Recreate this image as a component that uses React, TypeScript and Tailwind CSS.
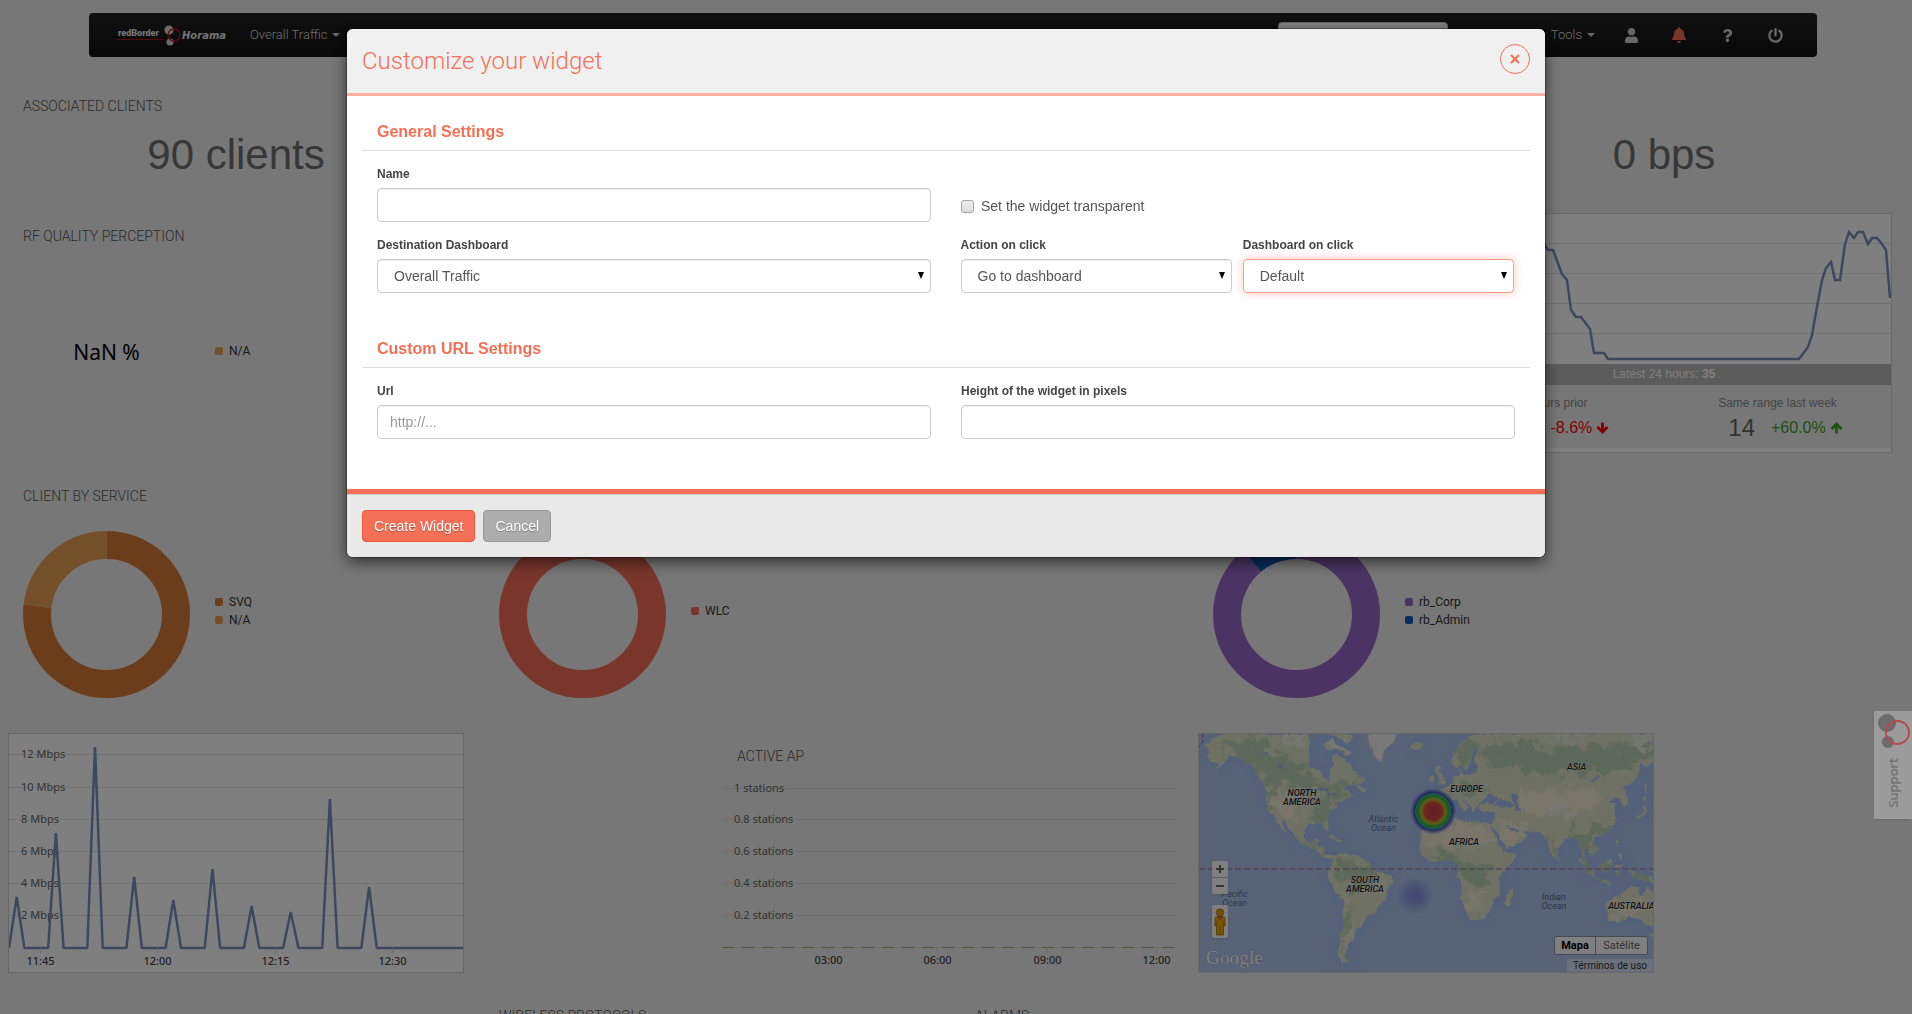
import React from "react";
import type { ReactNode } from "react";
import { FaBell, FaPowerOff, FaQuestion, FaUser } from "react-icons/fa";

/* ---------- navigation bar ---------- */

function Caret() {
  return <span className="border-x-4 border-t-4 border-x-transparent border-t-[#d0d0d0]" />;
}

function Logo() {
  return (
    <svg viewBox="0 0 112 22" className="h-[22px] w-28 overflow-visible" role="img" aria-label="redBorder Horama">
      <text x="2" y="12" fill="#e6e6e6" fontFamily="Roboto" fontWeight="900" fontSize="9">redBorder</text>
      <path d="M0 15.500H47" stroke="#b01010" strokeWidth="1" />
      <circle cx="53" cy="6" r="4.500" fill="#d8d8d8" />
      <circle cx="54" cy="18" r="3.500" fill="#d8d8d8" />
      <circle cx="58" cy="11" r="6" fill="none" stroke="#c01414" strokeWidth="1.300" />
      <text x="66" y="15" fill="#e6e6e6" fontFamily="DejaVu Sans" fontStyle="italic" fontWeight="bold" fontSize="10">Horama</text>
    </svg>
  );
}

function NavIcon({ label, children }: { label: string; children: ReactNode }) {
  return (
    <button type="button" aria-label={label} className="flex h-full w-12 items-center justify-center text-[15px] text-[#cfcfcf]">
      {children}
    </button>
  );
}

function Navbar() {
  return (
    <nav className="mr-[95px] ml-[89px] flex h-11 items-center rounded bg-linear-to-b from-[#222] to-[#111] pr-[18px] pl-[27px] text-[13px] font-light text-[#dcdcdc]">
      <Logo />
      <button type="button" className="ml-[22px] flex items-center gap-[5px]">
        Overall Traffic <Caret />
      </button>
      <div className="ml-auto flex h-full items-center">
        <input aria-label="Search" className="mr-[103px] h-[26px] w-[170px] rounded border border-[#ccc] bg-white px-2" />
        <button type="button" className="mr-3 flex items-center gap-[5px]">
          Tools <Caret />
        </button>
        <NavIcon label="User"><FaUser /></NavIcon>
        <NavIcon label="Alarms"><FaBell className="text-[16px] text-[#f06a52]" /></NavIcon>
        <NavIcon label="Help"><FaQuestion className="text-[13px]" /></NavIcon>
        <NavIcon label="Log out"><FaPowerOff /></NavIcon>
      </div>
    </nav>
  );
}

/* ---------- dashboard widgets ---------- */

function Title({ children }: { children?: ReactNode }) {
  return <h2 className="min-h-[33px] pt-[13px] pl-[15px] text-sm/5 font-light text-[#555]">{children}</h2>;
}

function BigNumber({ title, value }: { title?: string; value: string }) {
  return (
    <>
      <Title>{title}</Title>
      <p className="mt-[13px] text-center font-['Liberation_Sans',sans-serif] text-[42px]/[52px] text-[#6e6e6e]">{value}</p>
    </>
  );
}

type Slice = { name: string; color: string; share: number };

function Donut({ slices }: { slices: Slice[] }) {
  const length = 2 * Math.PI * 69.5;
  let start = 0;
  return (
    <svg viewBox="0 0 167 167" className="size-[167px]">
      {slices.map((s) => {
        const offset = -start * length;
        start += s.share;
        return (
          <circle key={s.name} cx="83.500" cy="83.500" r="69.500" fill="none" stroke={s.color} strokeWidth="28"
            strokeDasharray={`${s.share * length} ${length}`} strokeDashoffset={offset} transform="rotate(-90 83.5 83.5)" />
        );
      })}
    </svg>
  );
}

function PieWidget({ title, slices, empty }: { title: string; slices: Slice[]; empty?: string }) {
  return (
    <>
      <Title>{title}</Title>
      <div className="mt-[25px] flex items-center gap-[25px] pl-[15px]">
        {empty ? (
          <p className="flex h-[167px] w-[167px] items-center justify-center pb-1 font-['Noto_Sans',sans-serif] text-[21px] text-black">{empty}</p>
        ) : (
          <Donut slices={slices} />
        )}
        <ul className="mb-2 text-xs/[18px] text-[#333]">
          {slices.map((s) => (
            <li key={s.name} className="flex items-center gap-1.5">
              <span className="size-2 rounded-xs" style={{ backgroundColor: s.color }} />
              {s.name}
            </li>
          ))}
        </ul>
      </div>
    </>
  );
}

const traffic = [164, 100, 14, 144, 167, 136, 173, 179, 66, 154];
const trafficLine =
  traffic.map((y, i) => {
    const x = 7.7 + i * 39.15;
    return `${x - 7.7},214 ${x},${y - 1} ${x + 7.7},214`;
  }).join(" ") + " 454,214";

function Ticks({ items, y }: { items: [number, string][]; y: number }) {
  return (
    <g fontSize="11" fill="#444" fontWeight="500" textAnchor="middle">
      {items.map(([x, label]) => (
        <g key={label}>
          <path d={`M${x} ${y - 17}V${y - 12}`} stroke="#d4d4d4" />
          <text x={x} y={y}>{label}</text>
        </g>
      ))}
    </g>
  );
}

function TrafficChart() {
  return (
    <div className="h-full border border-[#cfcfcf] bg-white">
      <svg viewBox="0 0 454 238" className="h-full w-full font-['Noto_Sans',sans-serif]">
        {["12", "10", "8", "6", "4", "2"].map((v, i) => {
          const y = i === 0 ? 20.5 : 21.5 + i * 32;
          return (
            <g key={v}>
              <path d={`M0 ${y}H454`} stroke="#e4e4e4" />
              <text x="12" y={y + 3} fontSize="11" fill="#666">{v} Mbps</text>
            </g>
          );
        })}
        <polyline points={trafficLine} fill="none" stroke="#7b8fbf" strokeWidth="2.500" strokeLinejoin="bevel" />
        <Ticks y={231} items={[[31.5, "11:45"], [148.5, "12:00"], [266.5, "12:15"], [383.5, "12:30"]]} />
      </svg>
    </div>
  );
}

function ActiveApChart() {
  return (
    <div className="relative h-full">
      <svg viewBox="0 0 456 240" className="absolute inset-0 h-full w-full font-['Noto_Sans',sans-serif]">
        {["1", "0.8", "0.6", "0.4", "0.2"].map((v, i) => {
          const y = i === 0 ? 55.5 : 54.5 + i * 32;
          return (
            <g key={v}>
              <path d={`M0 ${y}H456`} stroke="#dcdcdc" />
              <text x="12" y={y + 3} fontSize="11" fill="#666">{v} stations</text>
            </g>
          );
        })}
        <path d="M0 214.500H456" stroke="#dcdcdc" />
        <path d="M0 214.500H456" stroke="#a0a078" strokeDasharray="12 8" />
        <Ticks y={231} items={[[106.5, "03:00"], [215.5, "06:00"], [325.5, "09:00"], [434.5, "12:00"]]} />
      </svg>
      <Title>ACTIVE AP</Title>
    </div>
  );
}

const latestLine =
  "0,36 60,30 105,28 108,31 111,36 116,36 125,60 130,66 134,96 139,103 144,103 153,115 157,139 167,139 171,145 362,145 371,133 375,121 380,93 385,66 389,54 394,48 398,66 403,66 408,30 412,18 417,24 421,18 426,18 431,30 435,24 440,24 445,30 449,36 453,84";

function Arrow({ up }: { up: boolean }) {
  return (
    <svg viewBox="0 0 13 12" className={up ? "h-3 w-[13px]" : "h-3 w-[13px] rotate-180"}>
      <path d="M6.500 11.500V2.500M1.500 7L6.500 2L11.500 7" fill="none" stroke="currentColor" strokeWidth="2.800" />
    </svg>
  );
}

function Compare({ label, value, change, up }: { label: string; value: string; change: string; up: boolean }) {
  return (
    <div className="flex-1 text-center">
      <p className="pt-2 text-xs/5 text-[#888]">{label}</p>
      <p className="flex items-center justify-center pl-4 text-2xl/[30px] text-[#666]">
        {value}
        <span className={up ? "ml-4 flex items-center gap-1 text-base text-[#3ca020]" : "ml-4 flex items-center gap-1 text-base text-[#ff0000]"}>
          {change}
          <Arrow up={up} />
        </span>
      </p>
    </div>
  );
}

function LatestWidget() {
  return (
    <div className="flex h-full flex-col border border-[#cfcfcf] bg-white font-['Liberation_Sans',sans-serif]">
      <svg viewBox="0 0 454 150" className="w-full flex-1">
        <path d="M0 29.500H454M0 59.500H454M0 89.500H454M0 119.500H454" stroke="#e4e4e4" />
        <polyline points={latestLine} fill="none" stroke="#7b8fbf" strokeWidth="2.500" />
      </svg>
      <p className="bg-[#b8b8b8] text-center text-xs/[21px] text-white">
        Latest 24 hours: <b>35</b>
      </p>
      <div className="mb-1 flex h-[63px] bg-[#efefef]">
        <Compare label="24 hours prior" value="38" change="-8.6%" up={false} />
        <Compare label="Same range last week" value="14" change="+60.0%" up />
      </div>
    </div>
  );
}

/* ---------- heat map ---------- */

const land = [
  // North and Central America
  "M45 62L60 45L95 27H358L362 62L354 95L362 125L392 140L404 162L418 172L422 150L418 138L432 120L424 98L440 88L462 100L480 118L490 138L520 160L528 170L505 180L470 182L456 197L474 198L486 214L462 226L446 228L437 247L425 264L410 282L416 302L412 320L402 304L394 294L372 294L352 302L342 322L347 344L364 352L372 340L388 342L382 360L400 368L402 384L420 394L430 392L430 403L405 398L384 380L350 362L322 346L312 328L290 300L270 274L278 300L290 326L276 314L255 276L236 256L228 226L230 200L222 178L202 152L186 122L152 100L118 92L100 118L68 142L88 118L60 108L50 92L62 80Z",
  // Arctic islands
  "M385 27L430 30L470 55L494 40L480 27ZM425 40L445 60L488 85L470 92L440 70L410 76L400 60ZM300 27L340 35L352 50L330 48ZM500 182L528 192L532 202L512 202Z",
  // Caribbean
  "M408 334L430 334L450 344L466 350L446 352L428 340Z",
  // Iceland, Ireland, Great Britain
  "M660 58L680 52L698 56L694 70L676 76L664 70ZM718 156L730 150L734 164L722 174ZM738 124L750 122L748 138L764 162L766 174L738 180L750 164L744 150L734 142Z",
  // Europe and Asia
  "M700 224L745 222L750 196L770 186L785 176L795 156L808 150L812 132L822 150L852 145L866 122L852 108L868 66L850 75L840 112L830 136L812 122L798 126L784 112L788 85L810 58L828 38L850 27H1389V112L1368 124L1352 110L1344 150L1330 170L1300 188L1308 206L1314 240L1298 244L1290 218L1268 222L1256 232L1276 236L1270 254L1280 282L1266 312L1240 330L1214 338L1212 350L1224 374L1206 396L1194 378L1182 370L1190 408L1216 448L1200 440L1180 402L1166 352L1150 335L1128 343L1106 370L1096 402L1082 386L1070 345L1048 322L1000 318L1010 332L984 358L940 374L920 336L902 302L912 285L916 262L876 262L864 246L876 234L908 236L926 222L902 206L880 225L862 244L850 264L840 242L812 216L838 250L822 258L800 225L785 226L772 242L745 262L720 266L704 260Z",
  // Africa and Madagascar
  "M712 278L740 264L792 260L802 284L832 292L852 286L902 298L908 316L926 352L942 380L978 384L966 412L932 450L926 478L932 502L912 526L902 556L880 582L840 588L828 556L812 520L816 482L800 452L802 420L782 404L742 412L712 408L688 378L690 335L700 306ZM968 488L970 508L958 542L946 538L950 508Z",
  // South America
  "M430 396L455 382L500 392L535 408L545 430L604 452L610 468L590 500L586 526L560 545L555 562L532 576L520 600L500 612L496 632L482 650L470 672L464 698L478 714L455 712L442 690L450 640L460 590L462 532L440 506L416 466L414 440L428 425Z",
  // Australia
  "M1250 532L1288 512L1308 494L1326 484L1344 490L1346 506L1360 514L1370 482L1389 502V608L1370 602L1346 582L1315 576L1285 592L1256 588L1254 560L1244 542ZM1376 626L1389 624V636L1378 636Z",
  // South-east Asian islands and Japan
  "M1160 394L1178 404L1210 446L1214 458L1196 446ZM1214 460L1262 468L1262 474L1216 466ZM1230 418L1262 402L1266 422L1250 444L1234 440ZM1276 424L1300 420L1282 432L1292 450L1278 452ZM1312 432L1340 444L1389 456V472L1350 466L1326 452ZM1276 340L1286 350L1280 366ZM1282 382L1298 390L1292 404ZM1336 280L1356 264L1364 240L1370 250L1364 272L1346 282ZM1358 212L1376 222L1362 232ZM1364 160L1372 190L1366 206ZM1104 394L1112 402L1106 410Z",
].join("");

function MapLabel({ x, y, lines, sea = false }: { x: number; y: number; lines: string[]; sea?: boolean }) {
  return (
    <g fill={sea ? "#5a6e96" : "#222"} fontStyle="italic" fontWeight={sea ? 400 : 500} fontSize="27" textAnchor="middle"
      stroke={sea ? "none" : "#f4f4e8"} strokeWidth="3" paintOrder="stroke">
      {lines.map((t, i) => <text key={t} x={x} y={y + i * 26}>{t}</text>)}
    </g>
  );
}

function HeatMap() {
  return (
    <div className="relative h-full border border-[#cfcfcf] font-['Roboto',sans-serif]">
      <svg viewBox="27 27 1362 714" preserveAspectRatio="xMidYMid slice" className="h-full w-full" role="img" aria-label="World heat map">
        <defs>
          <clipPath id="land"><path d={land} /></clipPath>
          <filter id="soft" x="-10%" y="-10%" width="120%" height="120%">
            <feGaussianBlur stdDeviation="5" result="b" />
            <feTurbulence type="fractalNoise" baseFrequency="0.030" numOctaves="4" seed="7" result="n" />
            <feDisplacementMap in="b" in2="n" scale="90" xChannelSelector="R" yChannelSelector="G" />
          </filter>
          <filter id="rough" x="-5%" y="-5%" width="110%" height="110%">
            <feTurbulence type="fractalNoise" baseFrequency="0.060" numOctaves="3" seed="3" result="n" />
            <feDisplacementMap in="SourceGraphic" in2="n" scale="14" xChannelSelector="R" yChannelSelector="G" />
          </filter>
          <filter id="coast" x="-10%" y="-10%" width="120%" height="120%"><feGaussianBlur stdDeviation="18" /></filter>
          <radialGradient id="heat">
            <stop offset="0" stopColor="#c83c50" />
            <stop offset="0.380" stopColor="#d8483c" />
            <stop offset="0.460" stopColor="#d09030" />
            <stop offset="0.540" stopColor="#a8c030" />
            <stop offset="0.640" stopColor="#3cb848" />
            <stop offset="0.730" stopColor="#30b058" />
            <stop offset="0.760" stopColor="#40c0c0" />
            <stop offset="0.790" stopColor="#3038b8" stopOpacity="0.900" />
            <stop offset="1" stopColor="#4050d0" stopOpacity="0" />
          </radialGradient>
          <radialGradient id="cool">
            <stop offset="0" stopColor="#5858d8" stopOpacity="0.500" />
            <stop offset="0.500" stopColor="#5c60d8" stopOpacity="0.350" />
            <stop offset="1" stopColor="#6070e0" stopOpacity="0" />
          </radialGradient>
        </defs>
        <rect x="27" y="27" width="1362" height="714" fill="#b0c6ee" />
        <path d={land} fill="#a2bff4" stroke="#a2bff4" strokeWidth="20" filter="url(#coast)" />
        <g filter="url(#rough)">
          <path d={land} fill="#dce2c8" />
          <g clipPath="url(#land)">
            <g filter="url(#soft)">
              <g fill="#b8d0b2">
                <path d="M90 60L200 40L260 80L340 130L410 180L500 160L510 185L440 200L360 190L300 170L240 190L200 140L130 90Z" />
                <path d="M380 215L440 200L420 270L400 300L370 270Z" />
                <path d="M240 180L262 210L250 250L230 225ZM300 300L330 340L400 385L380 395Z" />
                <path d="M430 420L500 405L560 430L560 480L500 500L470 480ZM460 560L480 560L464 640L450 690Z" />
                <path d="M790 100L850 30L860 60L830 130ZM860 60L960 50L1060 70L1240 60L1389 60V100L1240 150L1120 140L1040 150L960 120L900 120Z" />
                <path d="M760 190L840 175L900 200L840 215ZM1130 310L1180 320L1240 290L1270 310L1220 340L1180 400L1140 350Z" />
                <path d="M700 385L780 390L830 410L900 430L890 480L830 475L800 430Z" />
                <path d="M1060 330L1090 335L1096 400ZM1160 390L1389 440V475L1200 470Z" />
              </g>
              <g fill="#f2ead4">
                <path d="M255 190L320 200L330 290L290 300L250 240Z" />
                <path d="M700 290L900 300L920 350L780 370L700 350Z" />
                <path d="M920 280L1010 300L990 350L940 360ZM970 200L1240 190L1220 260L1040 270L960 240Z" />
                <path d="M1270 520L1350 530L1360 570L1270 580ZM825 510L880 500L870 560L840 570Z" />
                <path d="M560 440L600 455L580 510L555 480ZM455 500L480 520L470 560ZM470 600L490 620L466 690Z" />
              </g>
              <g fill="#eceee6">
                <path d="M240 27H360L350 70L290 60ZM400 27L490 40L470 80L420 70Z" />
                <path d="M1070 240L1150 250L1140 280L1080 270ZM1040 30L1200 30L1120 50ZM1310 30H1389V70Z" />
              </g>
            </g>
            <path d="M380 190L408 194L414 208L440 210M215 90L235 84M260 120L280 126" fill="none" stroke="#9cb8ec" strokeWidth="7" />
          </g>
          <path d="M530 20H620L612 52L584 74L572 108L558 98L542 70Z" fill="#f2f2f2" stroke="#d8dcc8" strokeWidth="3" />
          <g fill="#a2bff4">
            <path d="M912 240L930 222L962 232L972 244L930 248ZM962 210L980 204L988 222L982 236L990 256L976 254L972 232Z" />
            <path d="M898 302L908 306L948 372L944 384L926 352ZM948 298L968 310L990 318L978 324L956 312ZM1200 168L1222 150L1228 156L1210 172Z" />
          </g>
        </g>
        <path d="M27 432H1389" stroke="#b08ab0" strokeWidth="5" strokeDasharray="19 8" />
        <path d="M38 27V50L27 66" stroke="#b05090" strokeWidth="3" strokeDasharray="12 6" fill="none" />
        <circle cx="730" cy="259" r="70" fill="url(#heat)" />
        <circle cx="675" cy="512" r="56" fill="url(#cool)" />
        <MapLabel x={336} y={213} lines={["NORTH", "AMERICA"]} />
        <MapLabel x={525} y={474} lines={["SOUTH", "AMERICA"]} />
        <MapLabel x={830} y={200} lines={["EUROPE"]} />
        <MapLabel x={822} y={360} lines={["AFRICA"]} />
        <MapLabel x={1160} y={135} lines={["ASIA"]} />
        <MapLabel x={1324} y={552} lines={["AUSTRALIA"]} />
        <MapLabel sea x={580} y={291} lines={["Atlantic", "Ocean"]} />
        <MapLabel sea x={134} y={516} lines={["Pacific", "Ocean"]} />
        <MapLabel sea x={1092} y={525} lines={["Indian", "Ocean"]} />
        <text x="48" y="716" fontFamily="Liberation Serif" fontSize="58" fill="#fff" stroke="#8090b0" strokeWidth="2" paintOrder="stroke">Google</text>
      </svg>
      <div className="absolute top-[127px] left-[13px] flex w-4 flex-col rounded-xs bg-white shadow-sm">
        <button type="button" aria-label="Zoom in" className="flex h-[17px] items-center justify-center border-b border-[#bbb]">
          <svg viewBox="0 0 8 8" className="size-2"><path d="M4 0V8M0 4H8" stroke="#666" strokeWidth="2" /></svg>
        </button>
        <button type="button" aria-label="Zoom out" className="flex h-4 items-center justify-center">
          <svg viewBox="0 0 8 8" className="size-2"><path d="M0 4H8" stroke="#666" strokeWidth="2" /></svg>
        </button>
      </div>
      <button type="button" aria-label="Street View" className="absolute top-[171px] left-[13px] flex h-[33px] w-4 items-center justify-center rounded-xs bg-white shadow-sm">
        <svg viewBox="0 0 12 28" className="h-7 w-3">
          <path d="M1 9.500Q6 7 11 9.500V18H9.500V27H2.500V18H1Z" fill="#f0b000" stroke="#a86a00" strokeWidth="0.800" />
          <path d="M3 8.500H9L6 12.500Z" fill="#e05040" />
          <path d="M6 18V27M3 12V18M9 12V18" stroke="#a86a00" strokeWidth="0.700" />
          <circle cx="6" cy="4.500" r="3.700" fill="#e8a010" stroke="#a86a00" strokeWidth="0.800" />
        </svg>
      </button>
      <div className="absolute right-[5px] bottom-[17px] flex h-[19px] rounded-xs border border-[#8a94a8] bg-white text-[11px]/[17px]">
        <button type="button" className="w-[41px] border-r border-[#8a94a8] font-bold text-black">Mapa</button>
        <button type="button" className="w-[51px] text-[#666]">Satélite</button>
      </div>
      <a href="#terms" className="absolute right-0 bottom-0 bg-[#d6e0f4] px-1.5 text-[10px]/[13px] text-[#333]">Términos de uso</a>
    </div>
  );
}

/* ---------- dialog ---------- */

const controlStyle =
  "h-[34px] w-full rounded border border-[#ccc] bg-white text-sm text-[#555] shadow-[inset_0_1px_1px_rgba(0,0,0,0.075)] outline-none placeholder:text-[#999]";

function Field({ id, label, children }: { id: string; label: string; children: ReactNode }) {
  return (
    <div className="min-w-0 flex-1">
      <label htmlFor={id} className="mb-1 block text-xs/5 font-bold text-[#444]">{label}</label>
      {children}
    </div>
  );
}

function TextField({ id, label, placeholder }: { id: string; label: string; placeholder?: string }) {
  return (
    <Field id={id} label={label}>
      <input id={id} type="text" placeholder={placeholder} className={`${controlStyle} px-3`} />
    </Field>
  );
}

function SelectField({ id, label, option, active = false }: { id: string; label: string; option: string; active?: boolean }) {
  const ring = active ? "border-[#ff9c8c]! shadow-[0_0_8px_rgba(243,112,86,0.4)]!" : "";
  return (
    <Field id={id} label={label}>
      <div className="relative">
        <select id={id} className={`${controlStyle} appearance-none px-4 ${ring}`}>
          <option>{option}</option>
        </select>
        <svg viewBox="0 0 6 7" className="pointer-events-none absolute top-[13px] right-[7px] h-[7px] w-1.5">
          <path d="M0 0H6L3 7Z" fill="#000" />
        </svg>
      </div>
    </Field>
  );
}

function Section({ title, children }: { title: string; children: ReactNode }) {
  return (
    <section>
      <h4 className="border-b border-[#ddd] px-[15px] pb-2 text-base/5 font-bold text-[#f37056]">{title}</h4>
      <div className="flex flex-col gap-[13px] px-[15px] pt-[13px]">{children}</div>
    </section>
  );
}

function WidgetDialog() {
  return (
    <form role="dialog" aria-labelledby="dialog-title" className="w-[1198px] max-w-full overflow-hidden rounded-md bg-white font-['Liberation_Sans',sans-serif] shadow-[0_0_0_1px_rgba(0,0,0,0.3),0_5px_15px_rgba(0,0,0,0.6)]">
      <header className="flex items-start justify-between border-b-3 border-[#ffb0a6] bg-[#f0f0f0] px-[15px] pt-[15px] pb-[15px]">
        <h3 id="dialog-title" className="font-['Roboto',sans-serif] text-2xl/[34px] font-light text-[#f37056]">Customize your widget</h3>
        <button type="button" aria-label="Close" className="flex size-[30px] items-center justify-center rounded-full border border-[#f37056]">
          <svg viewBox="0 0 10 10" className="size-2.5"><path d="M1 1L9 9M9 1L1 9" stroke="#f37056" strokeWidth="2.200" /></svg>
        </button>
      </header>
      <div className="flex flex-col gap-[46px] px-[15px] pt-[26px] pb-[50px]">
        <Section title="General Settings">
          <div className="flex gap-[30px]">
            <TextField id="name" label="Name" />
            <div className="flex flex-1 items-end pb-1.5">
              <label className="flex items-center gap-[7px] text-sm/5 text-[#555]">
                <input type="checkbox" className="size-[13px] appearance-none rounded-[3px] border border-[#a5a5a5] bg-linear-to-b from-[#eee] to-[#ddd] shadow-xs" />
                Set the widget transparent
              </label>
            </div>
          </div>
          <div className="flex gap-[30px]">
            <SelectField id="destination" label="Destination Dashboard" option="Overall Traffic" />
            <div className="flex flex-1 gap-[11px] pr-px">
              <SelectField id="action" label="Action on click" option="Go to dashboard" />
              <SelectField id="target" label="Dashboard on click" option="Default" active />
            </div>
          </div>
        </Section>
        <Section title="Custom URL Settings">
          <div className="flex gap-[30px]">
            <TextField id="url" label="Url" placeholder="http://..." />
            <TextField id="height" label="Height of the widget in pixels" />
          </div>
        </Section>
      </div>
      <div className="h-[5px] bg-[#f37056]" />
      <footer className="flex gap-2 border-t border-[#ccc] bg-[#e9e9e9] p-[15px]">
        <button type="submit" className="h-8 rounded border border-[#e8583c] bg-[#f37056] px-[11px] text-sm text-white text-shadow-[0_1px_1px_rgba(0,0,0,0.3)]">Create Widget</button>
        <button type="button" className="h-8 rounded border border-[#999] bg-[#adadad] px-[11px] text-sm text-white text-shadow-[0_1px_1px_rgba(0,0,0,0.3)]">Cancel</button>
      </footer>
    </form>
  );
}

function SupportTab() {
  return (
    <a href="#support" className="fixed top-[711px] right-0 flex h-[108px] w-[38px] flex-col items-center bg-[#9b9b9b] font-['Noto_Sans',sans-serif] text-[13px]/5 font-medium text-[#6c6c6c] shadow-sm">
      <svg viewBox="0 0 38 40" className="h-10 w-[38px] shrink-0">
        <circle cx="13" cy="12" r="9" fill="#6c6c6c" />
        <circle cx="14" cy="31" r="6" fill="#6c6c6c" />
        <circle cx="23.500" cy="21.500" r="11.500" fill="none" stroke="#b34a4a" strokeWidth="1.800" />
      </svg>
      <span className="mt-[7px] rotate-180 [writing-mode:vertical-rl]">Support</span>
    </a>
  );
}

/* ---------- page ---------- */

export default function App() {
  return (
    <div className="h-screen overflow-hidden bg-[#eeeeee] pt-[13px] font-['Roboto',sans-serif]">
      <Navbar />
      <main className="mt-[26px] grid auto-rows-[110px] grid-cols-8 gap-5 pr-5 pl-2">
        <section className="col-span-2 col-start-1 row-start-1"><BigNumber title="ASSOCIATED CLIENTS" value="90 clients" /></section>
        <section className="col-span-2 col-start-7 row-start-1"><BigNumber value="0 bps" /></section>
        <section className="col-span-2 col-start-1 row-span-2 row-start-2">
          <PieWidget title="RF QUALITY PERCEPTION" empty="NaN %" slices={[{ name: "N/A", color: "#e8a054", share: 1 }]} />
        </section>
        <section className="col-span-2 col-start-7 row-span-2 row-start-2"><LatestWidget /></section>
        <section className="col-span-2 col-start-1 row-span-2 row-start-4">
          <PieWidget title="CLIENT BY SERVICE" slices={[{ name: "SVQ", color: "#d87a34", share: 0.768 }, { name: "N/A", color: "#e8a054", share: 0.232 }]} />
        </section>
        <section className="col-span-2 col-start-3 row-span-2 row-start-4">
          <PieWidget title="CONTROLLERS" slices={[{ name: "WLC", color: "#f46c56", share: 1 }]} />
        </section>
        <section className="col-span-2 col-start-6 row-span-2 row-start-4">
          <PieWidget title="SSID" slices={[{ name: "rb_Corp", color: "#9668c8", share: 0.888 }, { name: "rb_Admin", color: "#105abe", share: 0.112 }]} />
        </section>
        <section className="col-span-2 col-start-1 row-span-2 row-start-6"><TrafficChart /></section>
        <section className="col-span-2 col-start-4 row-span-2 row-start-6"><ActiveApChart /></section>
        <section className="col-span-2 col-start-6 row-span-2 row-start-6"><HeatMap /></section>
        <section className="col-span-2 col-start-3 row-start-8"><Title>WIRELESS PROTOCOLS</Title></section>
        <section className="col-span-2 col-start-5 row-start-8"><Title>ALARMS</Title></section>
      </main>
      <div className="fixed inset-0 flex items-start justify-center bg-black/50 pt-[29px] pr-5">
        <WidgetDialog />
      </div>
      <SupportTab />
    </div>
  );
}
